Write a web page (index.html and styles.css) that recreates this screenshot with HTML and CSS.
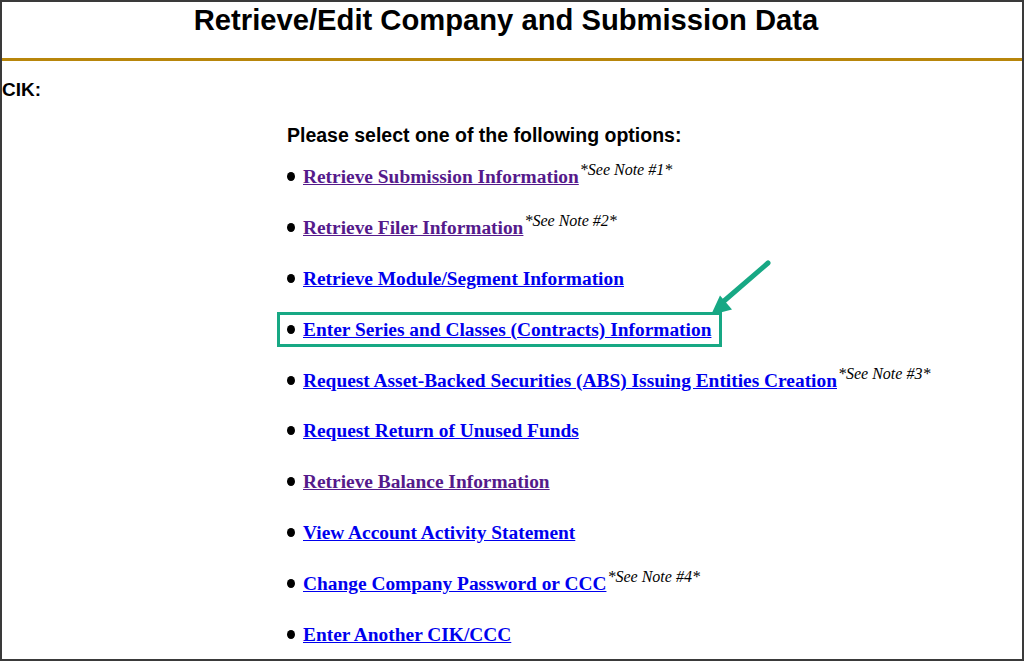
FILE: index.html
```html
<!DOCTYPE html>
<html>
<head>
<meta charset="utf-8">
<title>Retrieve/Edit Company and Submission Data</title>
<link rel="stylesheet" href="styles.css">
</head>
<body>
<div class="frame">
  <h1 class="title">Retrieve/Edit Company and Submission Data</h1>
  <div class="rule"></div>
  <div class="cik">CIK:</div>
  <div class="options">
    <div class="prompt">Please select one of the following options:</div>
    <ul class="list">
      <li class="item"><a class="link visited" href="#">Retrieve Submission Information</a><sup class="note">*See Note #1*</sup></li>
      <li class="item"><a class="link visited" href="#">Retrieve Filer Information</a><sup class="note">*See Note #2*</sup></li>
      <li class="item"><a class="link" href="#">Retrieve Module/Segment Information</a></li>
      <li class="item highlight"><a class="link" href="#">Enter Series and Classes (Contracts) Information</a></li>
      <li class="item"><a class="link" href="#">Request Asset-Backed Securities (ABS) Issuing Entities Creation</a><sup class="note">*See Note #3*</sup></li>
      <li class="item"><a class="link" href="#">Request Return of Unused Funds</a></li>
      <li class="item"><a class="link visited" href="#">Retrieve Balance Information</a></li>
      <li class="item"><a class="link" href="#">View Account Activity Statement</a></li>
      <li class="item"><a class="link" href="#">Change Company Password or CCC</a><sup class="note">*See Note #4*</sup></li>
      <li class="item"><a class="link" href="#">Enter Another CIK/CCC</a></li>
    </ul>
  </div>
  <svg class="arrow" width="80" height="70" viewBox="0 0 80 70">
    <line x1="72" y1="11" x2="28" y2="49" stroke="#17a884" stroke-width="5" stroke-linecap="round"/>
    <polygon points="15,63 24,43.5 36,57.5" fill="#17a884"/>
  </svg>
</div>
</body>
</html>
```

FILE: styles.css
```css
html, body {
  margin: 0;
  padding: 0;
  background: #ffffff;
}
.frame {
  position: relative;
  width: 1024px;
  height: 661px;
  box-sizing: border-box;
  border: 2px solid #3a3a3a;
  overflow: hidden;
  font-family: "Liberation Sans", Arial, sans-serif;
  color: #000;
}
.title {
  margin: 0;
  padding-top: 1px;
  height: 55px;
  text-align: center;
  font-size: 29.2px;
  line-height: 34px;
  font-weight: bold;
  padding-right: 12px;
}
.rule {
  height: 3px;
  background: #b8860b;
}
.cik {
  margin-top: 18px;
  font-size: 19px;
  font-weight: bold;
  line-height: 22px;
}
.options {
  margin-left: 285px;
  margin-top: 23px;
}
.prompt {
  font-size: 19.5px;
  font-weight: bold;
  line-height: 22px;
}
.list {
  list-style: none;
  margin: 20px 0 0 0;
  padding: 0;
  display: flex;
  flex-direction: column;
  gap: 29.9px;
}
.item {
  display: flex;
  align-items: center;
  height: 21px;
  font-family: "Liberation Serif", "Times New Roman", serif;
}
.item::before {
  content: "";
  width: 8px;
  height: 9px;
  border-radius: 50%;
  background: #000;
  margin-right: 8px;
  flex: none;
}
.highlight {
  position: relative;
}
.highlight::after {
  content: "";
  position: absolute;
  left: -10px;
  top: -7px;
  width: 439px;
  height: 29px;
  border: 3px solid #17a884;
}
.link {
  font-size: 19.4px;
  font-weight: bold;
  color: #0000ee;
  text-decoration: underline;
  line-height: 21px;
}
.link.visited {
  color: #551a8b;
}
.note {
  font-size: 16px;
  font-style: italic;
  align-self: flex-start;
  margin-top: -5px;
  margin-left: 1px;
}
.arrow {
  position: absolute;
  left: 694px;
  top: 250px;
}
```
